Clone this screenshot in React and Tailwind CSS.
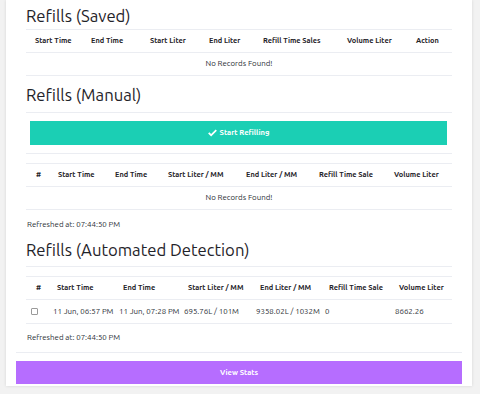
import React from "react";

const savedCols = [
  { label: "Start Time", w: 56 },
  { label: "End Time", w: 59 },
  { label: "Start Liter", w: 59 },
  { label: "End Liter", w: 54 },
  { label: "Refill Time Sales", w: 84 },
  { label: "Volume Liter", w: 69 },
  { label: "Action", w: 45 },
];

const manualCols = [
  { label: "#", w: 25, pl: 10 },
  { label: "Start Time", w: 57 },
  { label: "End Time", w: 53 },
  { label: "Start Liter / MM", w: 78 },
  { label: "End Liter / MM", w: 73 },
  { label: "Refill Time Sale", w: 75 },
  { label: "Volume Liter", w: 65 },
];

const autoCols = [
  { label: "#", w: 24, pl: 10 },
  { label: "Start Time", w: 66 },
  { label: "End Time", w: 65 },
  { label: "Start Liter / MM", w: 72 },
  { label: "End Liter / MM", w: 69 },
  { label: "Refill Time Sale", w: 70 },
  { label: "Volume Liter", w: 60 },
];

const autoRows = [
  ["11 Jun, 06:57 PM", "11 Jun, 07:28 PM", "695.76L / 101M", "9358.02L / 1032M", "0", "8662.26"],
];

function HeaderRow({ cols, pl }) {
  return (
    <div className="flex h-[24px] items-center border-y border-[#ebedf2] text-[7.4px] font-semibold text-[#1f2329]">
      {cols.map((c) => (
        <div
          key={c.label}
          className="shrink-0 whitespace-nowrap"
          style={{ width: c.w, paddingLeft: c.pl ?? pl }}
        >
          {c.label}
        </div>
      ))}
    </div>
  );
}

function EmptyRow() {
  return (
    <div className="flex h-[23px] items-center justify-center border-b border-[#ebedf2] text-[#2b3036]">
      No Records Found!
    </div>
  );
}

function Heading({ children, className = "" }) {
  return (
    <h2 className={`text-[16.7px] leading-[20px] text-[#1f2329] ${className}`}>{children}</h2>
  );
}

export default function App() {
  return (
    <div
      className="min-h-[394px] w-[480px] bg-[#f2f2f2] text-[7.9px]"
      style={{ fontFamily: "Ubuntu, 'Noto Sans', 'Open Sans', sans-serif" }}
    >
      <div className="ml-[6px] w-[466px] bg-white px-[10px] pb-[2px] shadow-[0_0_3px_rgba(0,0,0,0.12)]">
        <div className="px-[10px]">
          {/* Saved */}
          <Heading className="pt-[6px] pb-[3px]">Refills (Saved)</Heading>
          <HeaderRow cols={savedCols} pl={9} />
          <EmptyRow />

          {/* Manual */}
          <div className="border-b border-[#ebedf2] pt-[9px] pb-[7px]">
            <Heading>Refills (Manual)</Heading>
          </div>
          <button className="mx-[4px] mt-[8px] flex h-[24px] w-[417px] items-center justify-center gap-[3px] bg-[#1bcfb4] text-[7.6px] font-bold text-white">
            <svg width="9" height="8" viewBox="0 0 16 13" fill="white">
              <path d="M5.6 12.6 0.2 7.2l2.2-2.2 3.2 3.2L13.6 0.2l2.2 2.2z" />
            </svg>
            Start Refilling
          </button>
          <div className="mt-[8px] border-t border-[#ebedf2]" />
          <div className="mt-[9px]">
            <HeaderRow cols={manualCols} pl={7} />
            <EmptyRow />
          </div>
          <div className="flex h-[29px] items-center pl-[1px] text-[#2b3036]">
            Refreshed at: 07:44:50 PM
          </div>

          {/* Automated */}
          <div className="border-b border-[#ebedf2] pt-[1px] pb-[6px]">
            <Heading>Refills (Automated Detection)</Heading>
          </div>
          <div className="mt-[9px]">
            <HeaderRow cols={autoCols} pl={7} />
            {autoRows.map((r, i) => (
              <div key={i} className="flex h-[24px] items-center border-b border-[#ebedf2] text-[#2b3036]">
                <div className="shrink-0 pl-[5px]" style={{ width: autoCols[0].w }}>
                  <span className="block h-[7px] w-[7px] rounded-[1px] border border-[#9a9a9a] bg-white" />
                </div>
                {r.map((v, j) => (
                  <div
                    key={j}
                    className="shrink-0 whitespace-nowrap pl-[3px]"
                    style={{ width: autoCols[j + 1].w }}
                  >
                    {v}
                  </div>
                ))}
              </div>
            ))}
          </div>
          <div className="flex h-[28px] items-center pl-[1px] text-[#2b3036]">
            Refreshed at: 07:44:50 PM
          </div>
        </div>
        <div className="border-t border-[#ebedf2]" />
        <button className="mt-[8px] flex h-[23px] w-full items-center justify-center bg-[#b66dff] text-[7.6px] font-bold text-white">
          View Stats
        </button>
      </div>
    </div>
  );
}
